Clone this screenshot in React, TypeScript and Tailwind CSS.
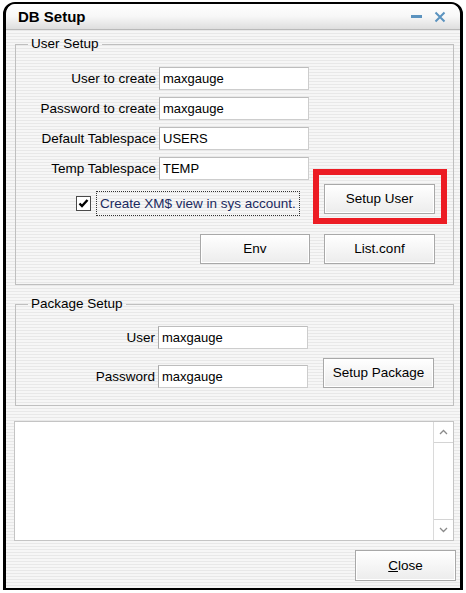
import React from 'react';

const stripes =
  'bg-[repeating-linear-gradient(180deg,#f6f6f6_0px,#f6f6f6_2px,#e8e8e8_2px,#e8e8e8_3px)]';

function Field({ label, value, labelW }: { label: string; value: string; labelW: string }) {
  return (
    <div className="flex items-center h-[23px]">
      <span className={`${labelW} text-right pr-[3px] text-black`}>{label}</span>
      <div className="w-[150px] h-[23px] bg-white border border-[#cdcdcd] border-l-[#a9a9a9] border-t-[#bdbdbd] flex items-center pl-[3px] text-[13px] text-black">
        {value}
      </div>
    </div>
  );
}

function Btn({ children, w = 'w-[111px]', h = 'h-[30px]' }: { children: React.ReactNode; w?: string; h?: string }) {
  return (
    <button className={`${w} ${h} border border-[#a8a8a8] bg-gradient-to-b from-white to-[#ececec] shadow-[inset_0_0_0_1px_#ffffff] text-black flex items-center justify-center`}>
      {children}
    </button>
  );
}

export default function App() {
  return (
    <div className="w-[466px] h-[593px] bg-white pt-[2px] pl-[3px] font-['Liberation_Sans',Arial,sans-serif] text-[13.5px] leading-none">
      <div className={`w-[460px] h-[588px] border-x-[3px] border-t-2 border-b-2 border-black rounded-t-[12px] overflow-hidden flex flex-col ${stripes}`}>
        {/* Title bar */}
        <div className="h-[26px] shrink-0 bg-gradient-to-b from-white via-[#f7f7f7] to-[#dedede] border-b border-[#b9b9b9] flex items-center pl-[12px] pr-[14px]">
          <span className="font-bold text-[15px] text-black">DB Setup</span>
          <div className="ml-auto flex items-center gap-[12px]">
            <svg width="11" height="11" viewBox="0 0 11 11">
              <rect x="0" y="4" width="11" height="3" fill="#5b93bf" />
            </svg>
            <svg width="12" height="12" viewBox="0 0 12 12">
              <path d="M1.5 1.5 L10.5 10.5 M10.5 1.5 L1.5 10.5" stroke="#5b93bf" strokeWidth="2" />
            </svg>
          </div>
        </div>

        {/* User Setup */}
        <fieldset className="ml-[9px] mt-[6px] w-[439px] border border-[#bfbfbf] pb-[20px]">
          <legend className="ml-[12px] px-[3px] h-[16px] flex items-center text-black">User Setup</legend>
          <div className="mt-[15px] flex flex-col gap-[7px]">
            <Field label="User to create" value="maxgauge" labelW="w-[143px]" />
            <Field label="Password to create" value="maxgauge" labelW="w-[143px]" />
            <Field label="Default Tablespace" value="USERS" labelW="w-[143px]" />
            <Field label="Temp Tablespace" value="TEMP" labelW="w-[143px]" />
          </div>
          <div className="mt-[4px] flex items-start">
            <div className="w-[294px] pl-[60px] pt-[7px] flex items-center">
              <div className="w-[15px] h-[15px] border border-[#4a4a4a] bg-white flex items-center justify-center">
                <svg width="11" height="11" viewBox="0 0 11 11">
                  <path d="M1.5 5.5 L4 8 L9.5 2" stroke="#000" strokeWidth="2.4" fill="none" />
                </svg>
              </div>
              <div className="ml-[5px] h-[25px] px-[3px] border border-dotted border-[#333] flex items-center text-[#1b2a5e]">
                Create XM$ view in sys account.
              </div>
            </div>
            <div className="ml-[14px] relative">
              <Btn>Setup User</Btn>
              <div className="absolute -left-[11px] -right-[12px] -top-[15px] -bottom-[10px] border-[6px] border-[#ec1c24] pointer-events-none" />
            </div>
          </div>
          <div className="mt-[18px] flex">
            <div className="w-[294px] flex justify-end">
              <Btn w="w-[110px]">Env</Btn>
            </div>
            <div className="ml-[14px]">
              <Btn>List.conf</Btn>
            </div>
          </div>
        </fieldset>

        {/* Package Setup */}
        <fieldset className="ml-[9px] mt-[11px] w-[439px] border border-[#bfbfbf] pb-[17px]">
          <legend className="ml-[12px] px-[3px] h-[16px] flex items-center text-black">Package Setup</legend>
          <div className="mt-[14px]">
            <Field label="User" value="maxgauge" labelW="w-[142px]" />
          </div>
          <div className="mt-[9px] flex items-end">
            <Field label="Password" value="maxgauge" labelW="w-[142px]" />
            <div className="ml-[15px]">
              <Btn>Setup Package</Btn>
            </div>
          </div>
        </fieldset>

        {/* Output area */}
        <div className="ml-[8px] mt-[15px] w-[440px] h-[120px] bg-white border border-[#c4c4c4] flex justify-end">
          <div className="w-[20px] h-full border-l border-[#dadada] flex flex-col">
            <div className="h-[21px] border-b border-[#d4d4d4] flex items-center justify-center">
              <svg width="9" height="6" viewBox="0 0 9 6">
                <path d="M1 5 L4.5 1.5 L8 5" stroke="#8a8a8a" strokeWidth="1.3" fill="none" />
              </svg>
            </div>
            <div className="flex-1" />
            <div className="h-[21px] border-t border-[#d4d4d4] flex items-center justify-center">
              <svg width="9" height="6" viewBox="0 0 9 6">
                <path d="M1 1 L4.5 4.5 L8 1" stroke="#8a8a8a" strokeWidth="1.3" fill="none" />
              </svg>
            </div>
          </div>
        </div>

        <div className="mt-[9px] flex justify-end pr-[4px]">
          <Btn w="w-[101px]" h="h-[31px]">
            <span>
              <span className="underline">C</span>lose
            </span>
          </Btn>
        </div>
      </div>
    </div>
  );
}
